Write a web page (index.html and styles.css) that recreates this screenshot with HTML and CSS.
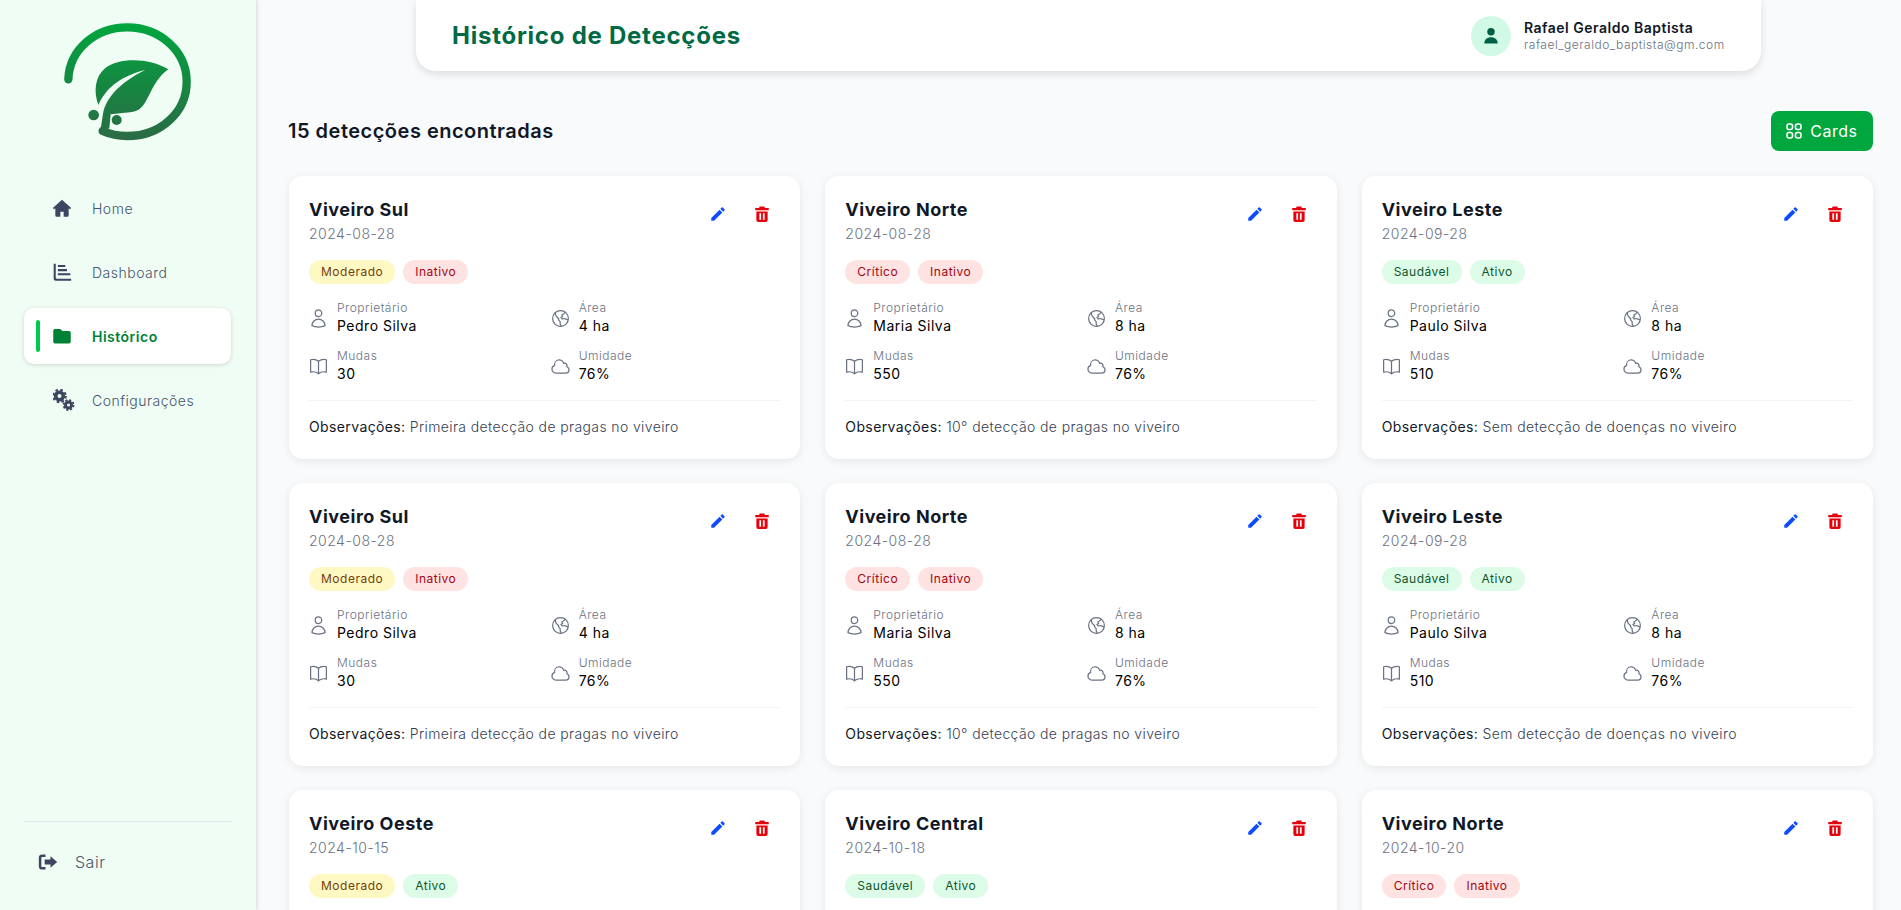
FILE: index.html
```html
<!DOCTYPE html>
<html lang="pt-BR">
<head>
    <meta charset="UTF-8">
    <meta name="viewport" content="width=device-width, initial-scale=1.0">
    <title>Histórico de Detecções</title>
    <link rel="stylesheet" href="styles.css">
</head>
<body>
    <svg class="icon-defs" xmlns="http://www.w3.org/2000/svg">
        <symbol id="i-user" viewBox="0 0 24 24"><path d="M15.75 6a3.75 3.75 0 1 1-7.5 0 3.75 3.75 0 0 1 7.5 0ZM4.501 20.118a7.5 7.5 0 0 1 14.998 0A17.933 17.933 0 0 1 12 21.75c-2.676 0-5.216-.584-7.499-1.632Z"/></symbol>
        <symbol id="i-globe" viewBox="0 0 24 24"><circle cx="12" cy="12" r="9"/><path d="M6 5.500l.4 2a6 6 0 0 0 1.700 3L10 12.300l-.4 1 2 2.200v2.500l1 2.400M17.300 4.800l-1.800 2L13.500 8l1 2-2 .6 1.500 2 2.500-.6 3.900 1.500"/></symbol>
        <symbol id="i-book" viewBox="0 0 24 24"><path d="M12 6.042A8.967 8.967 0 0 0 6 3.750c-1.052 0-2.062.18-3 .512v14.250A8.987 8.987 0 0 1 6 18c2.305 0 4.408.867 6 2.292m0-14.250a8.966 8.966 0 0 1 6-2.292c1.052 0 2.062.18 3 .512v14.250A8.987 8.987 0 0 0 18 18a8.967 8.967 0 0 0-6 2.292m0-14.250v14.250"/></symbol>
        <symbol id="i-cloud" viewBox="0 0 24 24"><path d="M2.250 15a4.500 4.500 0 0 0 4.500 4.500H18a3.750 3.750 0 0 0 1.332-7.257 3 3 0 0 0-3.758-3.848 5.250 5.250 0 0 0-10.233 2.330A4.502 4.502 0 0 0 2.250 15Z"/></symbol>
        <symbol id="i-edit" viewBox="0 0 24 24"><path d="M3 17.250V21h3.750L17.810 9.940l-3.750-3.750L3 17.250zM20.710 7.040c.39-.39.39-1.020 0-1.410l-2.340-2.340c-.39-.39-1.020-.39-1.410 0l-1.830 1.830 3.750 3.750 1.830-1.830z"/></symbol>
        <symbol id="i-trash" viewBox="0 0 24 24"><path fill-rule="evenodd" d="M9 2h6l1 2h5v3H3V4h5zM4.500 8.500h15V20a2.500 2.500 0 0 1-2.500 2.500H7A2.500 2.500 0 0 1 4.500 20zM8.500 11v8.500h2.300V11zM13.200 11v8.500h2.300V11z"/></symbol>
    </svg>

    <aside class="sidebar">
        <div class="logo">
            <svg width="150" height="135" viewBox="0 0 450 405" xmlns="http://www.w3.org/2000/svg">
                <defs>
                    <linearGradient id="logo-fill" gradientUnits="userSpaceOnUse" x1="0" y1="25" x2="0" y2="375">
                        <stop offset="0" stop-color="#00a63e"/>
                        <stop offset="1" stop-color="#2a6b45"/>
                    </linearGradient>
                </defs>
                <path d="M55 193C58 105 135 37 232 37C331 37 410 110 410 200C410 292 331 363 232 363C205 363 180 358 158 348" fill="none" stroke="url(#logo-fill)" stroke-width="25" stroke-linecap="round"/>
                <path d="M355 163C300 130 210 125 165 160C135 185 130 230 145 270C165 225 205 185 285 165C225 195 175 235 160 290L150 355L178 340L182 298L240 292C300 290 290 210 355 163Z" fill="url(#logo-fill)"/>
                <circle cx="131" cy="300" r="16" fill="url(#logo-fill)"/>
                <circle cx="200" cy="315" r="15" fill="url(#logo-fill)"/>
            </svg>
        </div>

        <nav class="nav">
            <a class="nav-item" href="#">
                <svg class="nav-icon" viewBox="0 0 24 24"><path d="M12 2 1 12l1.500 1.600L4 12.300V21a1.500 1.500 0 0 0 1.500 1.500H10v-6h4v6h4.500A1.500 1.500 0 0 0 20 21v-8.700l1.500 1.300L23 12Z"/></svg>
                <span>Home</span>
            </a>
            <a class="nav-item" href="#">
                <svg class="nav-icon" viewBox="0 0 24 24"><path d="M2 2h2.500v17a1 1 0 0 0 1 1H23v2.500H4.500A2.500 2.500 0 0 1 2 20zM7 3.500h9V6H7zM7 8.500h11V11H7zM7 13.500h15V16H7z"/></svg>
                <span>Dashboard</span>
            </a>
            <a class="nav-item active" href="#">
                <svg class="nav-icon" viewBox="0 0 24 24"><path d="M1.500 5.500a2 2 0 0 1 2-2H10l2.500 2.500h8a2 2 0 0 1 2 2v11a2 2 0 0 1-2 2h-17a2 2 0 0 1-2-2z"/></svg>
                <span>Histórico</span>
            </a>
            <a class="nav-item" href="#">
                <svg class="nav-icon nav-icon-cogs" viewBox="0 0 22 22">
                    <circle cx="6.500" cy="7" r="3.800" fill="none" stroke="currentColor" stroke-width="3.600"/>
                    <circle cx="6.500" cy="7" r="6.300" fill="none" stroke="currentColor" stroke-width="2" stroke-dasharray="2.600 2.350"/>
                    <circle cx="15.500" cy="16" r="3" fill="none" stroke="currentColor" stroke-width="3"/>
                    <circle cx="15.500" cy="16" r="5" fill="none" stroke="currentColor" stroke-width="1.800" stroke-dasharray="2.100 1.830"/>
                </svg>
                <span>Configurações</span>
            </a>
        </nav>

        <div class="sidebar-foot">
            <a class="logout" href="#">
                <svg class="nav-icon" viewBox="0 0 24 24"><path d="M9 3v3H5a1 1 0 0 0-1 1v10a1 1 0 0 0 1 1h4v3H5a4 4 0 0 1-4-4V7a4 4 0 0 1 4-4zM15 5l8 7-8 7v-4H8V9h7z"/></svg>
                <span>Sair</span>
            </a>
        </div>
    </aside>

    <main class="main">
        <header class="topbar">
            <h1>Histórico de Detecções</h1>
            <div class="user">
                <div class="avatar">
                    <svg width="20" height="20" viewBox="0 0 24 24"><circle cx="12" cy="7" r="4.500"/><path d="M4 21c0-5 3.500-7.500 8-7.500s8 2.500 8 7.500z"/></svg>
                </div>
                <div>
                    <div class="user-name">Rafael Geraldo Baptista</div>
                    <div class="user-mail">rafael_geraldo_baptista@gm.com</div>
                </div>
            </div>
        </header>

        <div class="toolbar">
            <h2>15 detecções encontradas</h2>
            <button class="view-btn" type="button">
                <svg width="16" height="16" viewBox="0 0 16 16"><rect x="1" y="1" width="5.500" height="5.500" rx="2"/><rect x="9.500" y="1" width="5.500" height="5.500" rx="2"/><rect x="1" y="9.500" width="5.500" height="5.500" rx="2"/><rect x="9.500" y="9.500" width="5.500" height="5.500" rx="2"/></svg>
                Cards
            </button>
        </div>

        <section class="cards">
            <article class="card">
                <div class="card-head">
                    <div><h3>Viveiro Sul</h3><div class="date">2024-08-28</div></div>
                    <div class="actions">
                        <button class="edit" type="button"><svg><use href="#i-edit"/></svg></button>
                        <button class="del" type="button"><svg><use href="#i-trash"/></svg></button>
                    </div>
                </div>
                <div class="badges"><span class="badge yellow">Moderado</span><span class="badge red">Inativo</span></div>
                <div class="info">
                    <div class="info-item"><svg><use href="#i-user"/></svg><div><div class="info-label">Proprietário</div><div class="info-value">Pedro Silva</div></div></div>
                    <div class="info-item"><svg><use href="#i-globe"/></svg><div><div class="info-label">Área</div><div class="info-value">4 ha</div></div></div>
                    <div class="info-item"><svg><use href="#i-book"/></svg><div><div class="info-label">Mudas</div><div class="info-value">30</div></div></div>
                    <div class="info-item"><svg><use href="#i-cloud"/></svg><div><div class="info-label">Umidade</div><div class="info-value">76%</div></div></div>
                </div>
                <p class="obs"><strong>Observações:</strong> Primeira detecção de pragas no viveiro</p>
            </article>

            <article class="card">
                <div class="card-head">
                    <div><h3>Viveiro Norte</h3><div class="date">2024-08-28</div></div>
                    <div class="actions">
                        <button class="edit" type="button"><svg><use href="#i-edit"/></svg></button>
                        <button class="del" type="button"><svg><use href="#i-trash"/></svg></button>
                    </div>
                </div>
                <div class="badges"><span class="badge red">Crítico</span><span class="badge red">Inativo</span></div>
                <div class="info">
                    <div class="info-item"><svg><use href="#i-user"/></svg><div><div class="info-label">Proprietário</div><div class="info-value">Maria Silva</div></div></div>
                    <div class="info-item"><svg><use href="#i-globe"/></svg><div><div class="info-label">Área</div><div class="info-value">8 ha</div></div></div>
                    <div class="info-item"><svg><use href="#i-book"/></svg><div><div class="info-label">Mudas</div><div class="info-value">550</div></div></div>
                    <div class="info-item"><svg><use href="#i-cloud"/></svg><div><div class="info-label">Umidade</div><div class="info-value">76%</div></div></div>
                </div>
                <p class="obs"><strong>Observações:</strong> 10° detecção de pragas no viveiro</p>
            </article>

            <article class="card">
                <div class="card-head">
                    <div><h3>Viveiro Leste</h3><div class="date">2024-09-28</div></div>
                    <div class="actions">
                        <button class="edit" type="button"><svg><use href="#i-edit"/></svg></button>
                        <button class="del" type="button"><svg><use href="#i-trash"/></svg></button>
                    </div>
                </div>
                <div class="badges"><span class="badge green">Saudável</span><span class="badge green">Ativo</span></div>
                <div class="info">
                    <div class="info-item"><svg><use href="#i-user"/></svg><div><div class="info-label">Proprietário</div><div class="info-value">Paulo Silva</div></div></div>
                    <div class="info-item"><svg><use href="#i-globe"/></svg><div><div class="info-label">Área</div><div class="info-value">8 ha</div></div></div>
                    <div class="info-item"><svg><use href="#i-book"/></svg><div><div class="info-label">Mudas</div><div class="info-value">510</div></div></div>
                    <div class="info-item"><svg><use href="#i-cloud"/></svg><div><div class="info-label">Umidade</div><div class="info-value">76%</div></div></div>
                </div>
                <p class="obs"><strong>Observações:</strong> Sem detecção de doenças no viveiro</p>
            </article>

            <article class="card">
                <div class="card-head">
                    <div><h3>Viveiro Sul</h3><div class="date">2024-08-28</div></div>
                    <div class="actions">
                        <button class="edit" type="button"><svg><use href="#i-edit"/></svg></button>
                        <button class="del" type="button"><svg><use href="#i-trash"/></svg></button>
                    </div>
                </div>
                <div class="badges"><span class="badge yellow">Moderado</span><span class="badge red">Inativo</span></div>
                <div class="info">
                    <div class="info-item"><svg><use href="#i-user"/></svg><div><div class="info-label">Proprietário</div><div class="info-value">Pedro Silva</div></div></div>
                    <div class="info-item"><svg><use href="#i-globe"/></svg><div><div class="info-label">Área</div><div class="info-value">4 ha</div></div></div>
                    <div class="info-item"><svg><use href="#i-book"/></svg><div><div class="info-label">Mudas</div><div class="info-value">30</div></div></div>
                    <div class="info-item"><svg><use href="#i-cloud"/></svg><div><div class="info-label">Umidade</div><div class="info-value">76%</div></div></div>
                </div>
                <p class="obs"><strong>Observações:</strong> Primeira detecção de pragas no viveiro</p>
            </article>

            <article class="card">
                <div class="card-head">
                    <div><h3>Viveiro Norte</h3><div class="date">2024-08-28</div></div>
                    <div class="actions">
                        <button class="edit" type="button"><svg><use href="#i-edit"/></svg></button>
                        <button class="del" type="button"><svg><use href="#i-trash"/></svg></button>
                    </div>
                </div>
                <div class="badges"><span class="badge red">Crítico</span><span class="badge red">Inativo</span></div>
                <div class="info">
                    <div class="info-item"><svg><use href="#i-user"/></svg><div><div class="info-label">Proprietário</div><div class="info-value">Maria Silva</div></div></div>
                    <div class="info-item"><svg><use href="#i-globe"/></svg><div><div class="info-label">Área</div><div class="info-value">8 ha</div></div></div>
                    <div class="info-item"><svg><use href="#i-book"/></svg><div><div class="info-label">Mudas</div><div class="info-value">550</div></div></div>
                    <div class="info-item"><svg><use href="#i-cloud"/></svg><div><div class="info-label">Umidade</div><div class="info-value">76%</div></div></div>
                </div>
                <p class="obs"><strong>Observações:</strong> 10° detecção de pragas no viveiro</p>
            </article>

            <article class="card">
                <div class="card-head">
                    <div><h3>Viveiro Leste</h3><div class="date">2024-09-28</div></div>
                    <div class="actions">
                        <button class="edit" type="button"><svg><use href="#i-edit"/></svg></button>
                        <button class="del" type="button"><svg><use href="#i-trash"/></svg></button>
                    </div>
                </div>
                <div class="badges"><span class="badge green">Saudável</span><span class="badge green">Ativo</span></div>
                <div class="info">
                    <div class="info-item"><svg><use href="#i-user"/></svg><div><div class="info-label">Proprietário</div><div class="info-value">Paulo Silva</div></div></div>
                    <div class="info-item"><svg><use href="#i-globe"/></svg><div><div class="info-label">Área</div><div class="info-value">8 ha</div></div></div>
                    <div class="info-item"><svg><use href="#i-book"/></svg><div><div class="info-label">Mudas</div><div class="info-value">510</div></div></div>
                    <div class="info-item"><svg><use href="#i-cloud"/></svg><div><div class="info-label">Umidade</div><div class="info-value">76%</div></div></div>
                </div>
                <p class="obs"><strong>Observações:</strong> Sem detecção de doenças no viveiro</p>
            </article>

            <article class="card">
                <div class="card-head">
                    <div><h3>Viveiro Oeste</h3><div class="date">2024-10-15</div></div>
                    <div class="actions">
                        <button class="edit" type="button"><svg><use href="#i-edit"/></svg></button>
                        <button class="del" type="button"><svg><use href="#i-trash"/></svg></button>
                    </div>
                </div>
                <div class="badges"><span class="badge yellow">Moderado</span><span class="badge green">Ativo</span></div>
            </article>

            <article class="card">
                <div class="card-head">
                    <div><h3>Viveiro Central</h3><div class="date">2024-10-18</div></div>
                    <div class="actions">
                        <button class="edit" type="button"><svg><use href="#i-edit"/></svg></button>
                        <button class="del" type="button"><svg><use href="#i-trash"/></svg></button>
                    </div>
                </div>
                <div class="badges"><span class="badge green">Saudável</span><span class="badge green">Ativo</span></div>
            </article>

            <article class="card">
                <div class="card-head">
                    <div><h3>Viveiro Norte</h3><div class="date">2024-10-20</div></div>
                    <div class="actions">
                        <button class="edit" type="button"><svg><use href="#i-edit"/></svg></button>
                        <button class="del" type="button"><svg><use href="#i-trash"/></svg></button>
                    </div>
                </div>
                <div class="badges"><span class="badge red">Crítico</span><span class="badge red">Inativo</span></div>
            </article>
        </section>
    </main>
</body>
</html>
```

FILE: styles.css
```css
* {
    box-sizing: border-box;
}

html,
body {
    height: 100%;
}

body {
    margin: 0;
    display: flex;
    overflow: hidden;
    font-family: Inter, "Noto Sans", sans-serif;
    letter-spacing: 0.5px;
    background-color: #f9fafb;
    color: #101828;
}

h1,
h2,
h3,
p {
    margin: 0;
}

a {
    text-decoration: none;
}

.icon-defs {
    display: none;
}

/* sidebar */
.sidebar {
    width: 256px;
    height: 910px;
    flex-shrink: 0;
    display: flex;
    flex-direction: column;
    padding: 0 24px;
    background-color: #f0fdf4;
    box-shadow: 1px 0 4px rgba(0, 0, 0, 0.15);
}

.logo {
    height: 180px;
    padding: 15px 0 0 26px;
}

.nav {
    display: flex;
    flex-direction: column;
    gap: 8px;
    margin-right: 1px;
}

.nav-item {
    display: flex;
    align-items: center;
    height: 56px;
    padding-left: 12px;
    border-radius: 10px;
    font-size: 14px;
    font-weight: 300;
    color: #45556c;
}

.nav-item::before {
    content: "";
    width: 4px;
    height: 32px;
    margin-right: 12px;
    border-radius: 2px;
}

.nav-icon {
    width: 20px;
    height: 20px;
    margin-right: 20px;
    flex-shrink: 0;
    fill: #3b4660;
}

.nav-icon-cogs {
    width: 22px;
    height: 22px;
    margin: 0 17px 0 1px;
    color: #3b4660;
    fill: none;
}

.nav-item.active {
    background-color: #ffffff;
    box-shadow: 0 1px 4px rgba(0, 0, 0, 0.15);
    color: #008236;
    font-weight: 600;
}

.nav-item.active::before {
    background-color: #00c950;
}

.nav-item.active .nav-icon {
    fill: #008236;
}

.sidebar-foot {
    margin-top: auto;
    height: 89px;
    border-top: 1px solid #e2e8f0;
}

.logout {
    display: flex;
    align-items: center;
    height: 80px;
    padding-left: 14px;
    font-size: 16px;
    font-weight: 300;
    color: #45556c;
}

.logout .nav-icon {
    margin-right: 17px;
}

/* main */
.main {
    flex: 1;
    min-width: 0;
    height: 910px;
    overflow: hidden;
    padding: 0 28px 0 33px;
}

.topbar {
    display: flex;
    align-items: center;
    justify-content: space-between;
    height: 71px;
    margin: 0 112px 0 127px;
    padding: 0 36px;
    background-color: #ffffff;
    border-radius: 0 0 20px 20px;
    box-shadow: 0 3px 8px rgba(0, 0, 0, 0.12);
}

.topbar h1 {
    font-size: 24px;
    font-weight: 700;
    letter-spacing: 0.75px;
    color: #006a45;
}

.user {
    display: flex;
    align-items: center;
    gap: 13px;
    width: 254px;
}

.avatar {
    width: 40px;
    height: 40px;
    flex-shrink: 0;
    display: flex;
    align-items: center;
    justify-content: center;
    border-radius: 50%;
    background-color: #d0fae5;
    fill: #006045;
}

.user-name {
    font-size: 14px;
    font-weight: 600;
    line-height: 18px;
    color: #101828;
}

.user-mail {
    font-size: 12px;
    font-weight: 300;
    line-height: 16px;
    color: #6a7282;
}

.toolbar {
    display: flex;
    align-items: center;
    justify-content: space-between;
    margin: 40px 0 25px -1px;
}

.toolbar h2 {
    font-size: 20px;
    font-weight: 600;
}

.view-btn {
    display: flex;
    align-items: center;
    gap: 8px;
    height: 40px;
    padding: 0 15.5px;
    border: none;
    border-radius: 8px;
    background-color: #00a63e;
    color: #ffffff;
    font: inherit;
    font-size: 16px;
    letter-spacing: 0.5px;
    fill: none;
    stroke: #ffffff;
    stroke-width: 1.600;
}

.cards {
    display: grid;
    grid-template-columns: repeat(3, 1fr);
    gap: 24px 25px;
}

.card {
    height: 283px;
    padding: 20px;
    background-color: #ffffff;
    border-radius: 14px;
    box-shadow: 0 2px 10px rgba(0, 0, 0, 0.08);
}

.card-head {
    display: flex;
    justify-content: space-between;
}

.card h3 {
    font-size: 18px;
    font-weight: 700;
    line-height: 28px;
}

.date {
    font-size: 14px;
    font-weight: 300;
    line-height: 20px;
    color: #6a7282;
}

.actions {
    display: flex;
    gap: 8px;
}

.actions button {
    width: 36px;
    height: 36px;
    padding: 9px;
    border: none;
    background: none;
}

.actions svg {
    width: 18px;
    height: 18px;
    display: block;
}

.edit {
    fill: #0f4cff;
}

.del {
    fill: #e7000b;
}

.badges {
    display: flex;
    gap: 8px;
    margin-top: 16px;
}

.badge {
    height: 24px;
    padding: 0 12px;
    border-radius: 12px;
    font-size: 12px;
    font-weight: 400;
    line-height: 24px;
}

.badge.yellow {
    background-color: #fef9c2;
    color: #733e0a;
}

.badge.red {
    background-color: #ffe2e2;
    color: #9f0712;
}

.badge.green {
    background-color: #dcfce7;
    color: #0d542b;
}

.info {
    display: grid;
    grid-template-columns: 1fr 1fr;
    gap: 12px;
    margin-top: 16px;
}

.info-item {
    display: flex;
    align-items: center;
    gap: 8px;
}

.info-item svg {
    width: 21px;
    height: 21px;
    margin-left: -1px;
    flex-shrink: 0;
    fill: none;
    stroke: #6a7282;
    stroke-width: 1.400;
    stroke-linecap: round;
    stroke-linejoin: round;
}

.info-label {
    font-size: 12px;
    font-weight: 300;
    line-height: 16px;
    color: #6a7282;
}

.info-value {
    font-size: 14px;
    font-weight: 400;
    line-height: 20px;
    color: #000000;
}

.obs {
    margin-top: 16px;
    padding-top: 16px;
    border-top: 1px solid #f3f4f6;
    font-size: 14px;
    font-weight: 300;
    letter-spacing: 0.38px;
    line-height: 20px;
    color: #364153;
}

.obs strong {
    font-weight: 400;
    color: #101828;
}
```
